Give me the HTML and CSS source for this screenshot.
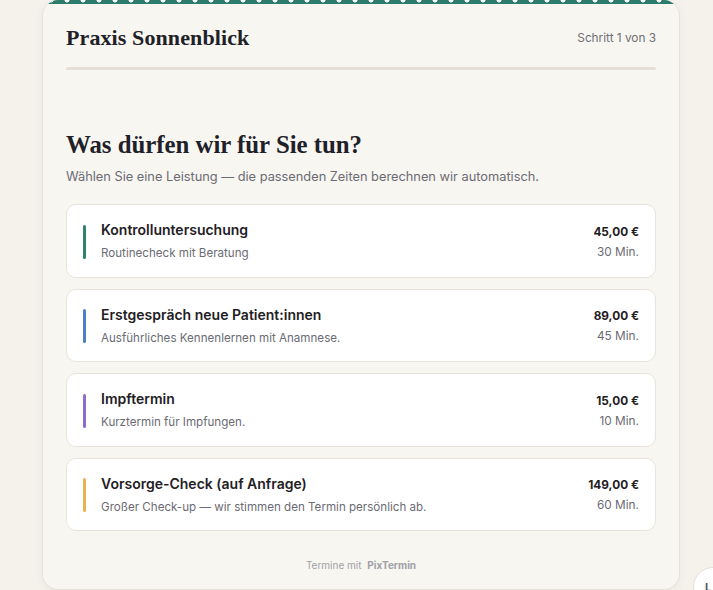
FILE: index.html
```html
<!DOCTYPE html>
<html lang="de">
<head>
<meta charset="utf-8">
<title>Praxis Sonnenblick – Termin buchen</title>
<link rel="stylesheet" href="styles.css">
</head>
<body>
<div class="page">
  <main class="card">
    <header class="top">
      <h1 class="brand">Praxis Sonnenblick</h1>
      <span class="step">Schritt 1 von 3</span>
    </header>
    <div class="progress"></div>

    <h2 class="title">Was dürfen wir für Sie tun?</h2>
    <p class="lead">Wählen Sie eine Leistung — die passenden Zeiten berechnen wir automatisch.</p>

    <ul class="services">
      <li class="service">
        <span class="accent teal"></span>
        <div class="info">
          <div class="name">Kontrolluntersuchung</div>
          <div class="desc">Routinecheck mit Beratung</div>
        </div>
        <div class="meta">
          <div class="price">45,00 €</div>
          <div class="dur">30 Min.</div>
        </div>
      </li>
      <li class="service">
        <span class="accent blue"></span>
        <div class="info">
          <div class="name">Erstgespräch neue Patient:innen</div>
          <div class="desc">Ausführliches Kennenlernen mit Anamnese.</div>
        </div>
        <div class="meta">
          <div class="price">89,00 €</div>
          <div class="dur">45 Min.</div>
        </div>
      </li>
      <li class="service">
        <span class="accent purple"></span>
        <div class="info">
          <div class="name">Impftermin</div>
          <div class="desc">Kurztermin für Impfungen.</div>
        </div>
        <div class="meta">
          <div class="price">15,00 €</div>
          <div class="dur">10 Min.</div>
        </div>
      </li>
      <li class="service">
        <span class="accent amber"></span>
        <div class="info">
          <div class="name">Vorsorge-Check (auf Anfrage)</div>
          <div class="desc">Großer Check-up — wir stimmen den Termin persönlich ab.</div>
        </div>
        <div class="meta">
          <div class="price">149,00 €</div>
          <div class="dur">60 Min.</div>
        </div>
      </li>
    </ul>

    <footer class="foot">Termine mit <strong>PixTermin</strong></footer>
  </main>
</div>
<button class="lang" type="button">L</button>
</body>
</html>
```
FILE: styles.css
```css
* { box-sizing: border-box; }

html, body {
  margin: 0;
  padding: 0;
  background: #f5f2ec;
  font-family: Inter, "Noto Sans", sans-serif;
  color: #1f2024;
  overflow: hidden;
}

.page {
  padding: 0 33px 0 42px;
}

.card {
  position: relative;
  background: #f8f6f1;
  border: 1px solid #e6e2d9;
  border-top: none;
  border-radius: 16px;
  box-shadow: 0 2px 10px rgba(60, 50, 30, 0.06);
  padding: 4px 23px 16px;
  overflow: hidden;
}

.card::before {
  content: "";
  position: absolute;
  left: 0;
  right: 0;
  top: 0;
  height: 4px;
  background:
    radial-gradient(circle at 8px 0, #ffffff 2.2px, transparent 2.8px) 0 0 / 16px 4px repeat-x,
    #2c7c6c;
}

.top {
  display: flex;
  align-items: center;
  justify-content: space-between;
  padding-top: 20px;
}

.brand {
  margin: 0;
  font-family: "Liberation Serif", "DejaVu Serif", serif;
  font-weight: 700;
  font-size: 22px;
  line-height: 28px;
  color: #1f2128;
  letter-spacing: 0.1px;
}

.step {
  font-size: 11.8px;
  color: #6e6e76;
}

.progress {
  margin-top: 15px;
  height: 3px;
  border-radius: 2px;
  background: #e4e0d7;
}

.title {
  margin: 59px 0 0;
  font-family: "Liberation Serif", "DejaVu Serif", serif;
  font-weight: 700;
  font-size: 24.8px;
  line-height: 32px;
  color: #1f2128;
}

.lead {
  margin: 6px 0 0;
  font-size: 12.8px;
  line-height: 20px;
  color: #6b6b74;
}

.services {
  list-style: none;
  margin: 17px 0 0;
  padding: 0;
  display: flex;
  flex-direction: column;
  gap: 11px;
}

.service {
  display: flex;
  align-items: center;
  gap: 15px;
  background: #ffffff;
  border: 1px solid #e8e4db;
  border-radius: 10px;
  padding: 16px 16px 14.5px;
}

.accent {
  flex: none;
  width: 3px;
  height: 34px;
  border-radius: 2px;
}
.accent.teal { background: #2f8270; }
.accent.blue { background: #4a80c4; }
.accent.purple { background: #8d6ccb; }
.accent.amber { background: #ebb04f; }

.info {
  flex: 1;
  min-width: 0;
}

.name {
  font-size: 14px;
  font-weight: 600;
  line-height: 18px;
  color: #1f2024;
}

.desc {
  margin-top: 5px;
  font-size: 11.6px;
  line-height: 18px;
  color: #6b6b74;
}

.meta {
  text-align: right;
  flex: none;
}

.price {
  font-size: 11.8px;
  font-weight: 700;
  line-height: 18px;
  color: #1f2024;
}

.dur {
  margin-top: 2px;
  font-size: 11.8px;
  line-height: 18px;
  color: #6b6b74;
}

.foot {
  margin-top: 26px;
  text-align: center;
  font-size: 10px;
  line-height: 16px;
  color: #a0a0a6;
}
.foot strong {
  margin-left: 3px;
  font-weight: 700;
}

.lang {
  position: fixed;
  left: 693px;
  top: 567px;
  width: 40px;
  height: 40px;
  border-radius: 50%;
  background: #ffffff;
  border: 1px solid #e3dfd6;
  padding: 0 0 0 11px;
  text-align: left;
  font-family: Inter, sans-serif;
  font-size: 11px;
  font-weight: 700;
  color: #55565c;
  line-height: 30px;
}
```
